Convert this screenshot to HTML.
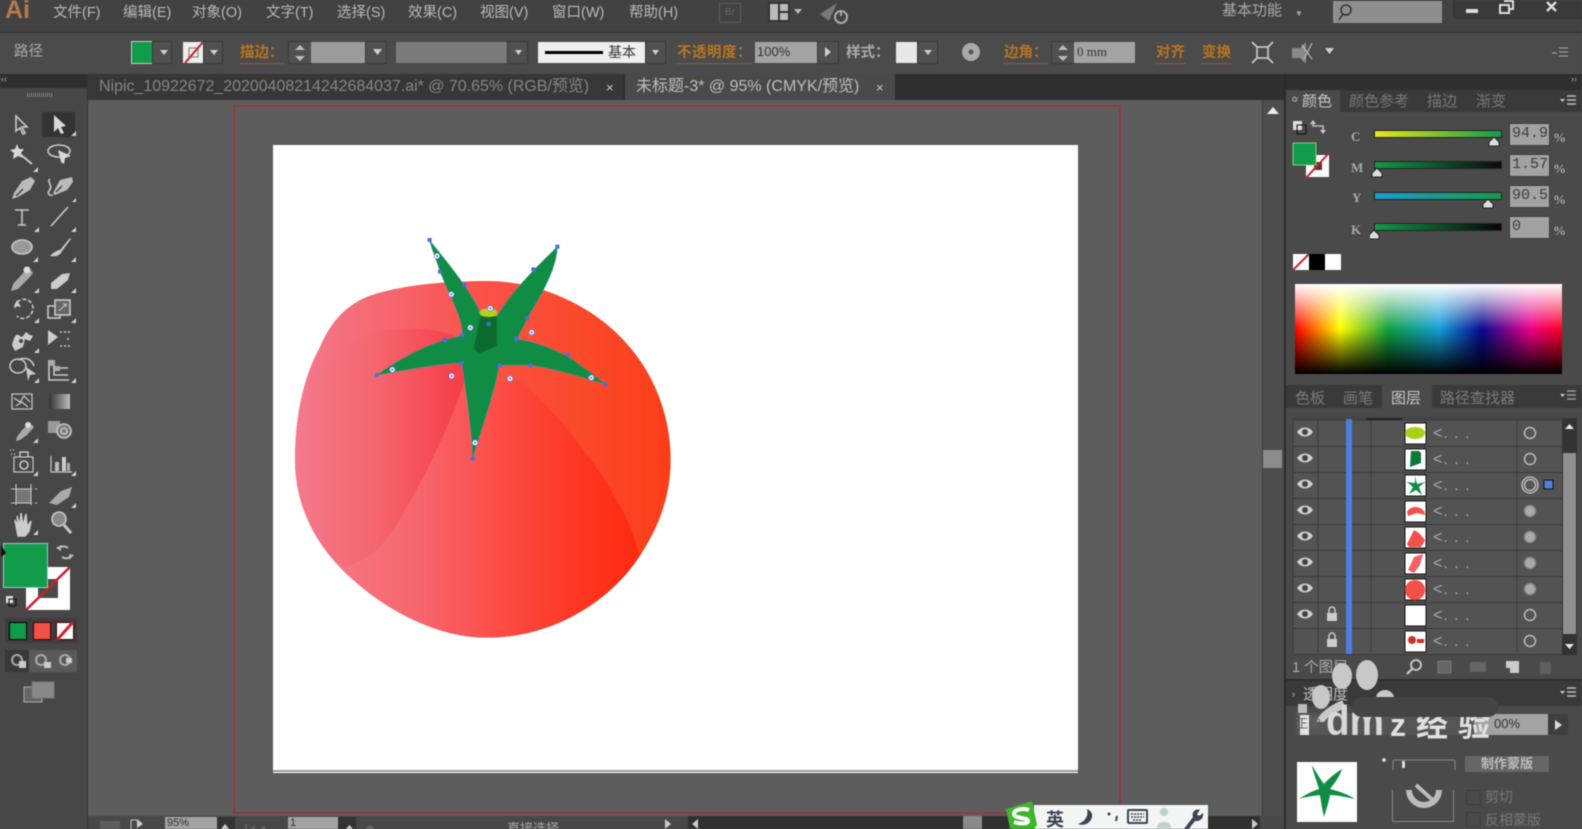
<!DOCTYPE html>
<html><head><meta charset="utf-8">
<style>
html,body{margin:0;padding:0;background:#4a4a4a}
#p{position:relative;width:1582px;height:829px;overflow:hidden;background:#4a4a4a;font-family:"Liberation Sans","Noto Sans CJK SC",sans-serif;color:#b5b5b5;filter:blur(.5px)}
#p div{position:absolute}
.t{white-space:nowrap;line-height:1}
.m{font-size:14.5px;top:6px;color:#b8b8b8}
.o{font-size:14.5px;top:46px;color:#b87420;font-weight:bold;border-bottom:1px dotted #b87420;padding-bottom:2px}
.b{background:#505050;height:21px;top:42px;outline:1px solid #393939}
.i{background:#a3a3a3;height:21px;top:42px;color:#333;font-size:13px;line-height:20px}
.lb{font:bold 13px "Liberation Serif",serif;color:#aaa}
.v{background:#a2a2a2;left:1510px;width:39px;height:21px;color:#3c3c3c;font:15px/20px "Liberation Mono",monospace;text-indent:2px;overflow:hidden;outline:1px solid #3d3d3d}
.s{left:1375px;width:126px;height:6px;outline:1px solid #222}
.r{left:1293px;width:269px;height:25px;background:#535353;border-bottom:1px solid #3a3a3a}
</style></head><body><div id="p">

<!-- menu bar -->
<div style="left:0;top:0;width:1582px;height:32px;background:#424242"></div>
<div style="left:0;top:32px;width:1582px;height:1px;background:#333"></div>
<div style="left:0;top:33px;width:1582px;height:41px;background:#4b4b4b"></div>
<div class="t" style="left:5px;top:-2px;font-size:25px;font-weight:bold;color:#b8794a">Ai</div>
<div class="t m" style="left:53px">文件(F)</div>
<div class="t m" style="left:123px">编辑(E)</div>
<div class="t m" style="left:192px">对象(O)</div>
<div class="t m" style="left:266px">文字(T)</div>
<div class="t m" style="left:337px">选择(S)</div>
<div class="t m" style="left:408px">效果(C)</div>
<div class="t m" style="left:480px">视图(V)</div>
<div class="t m" style="left:552px">窗口(W)</div>
<div class="t m" style="left:629px">帮助(H)</div>
<div class="t" style="left:719px;top:3px;width:20px;height:18px;border:1px solid #5c5c5c;font-size:10px;line-height:18px;text-align:center;color:#666">Br</div>
<svg style="position:absolute;left:765px;top:0" width="90" height="28"><path d="M3 2h22v20H3z" fill="#333"/><path d="M5 4h8v16H5zM15 4h8v7h-8zM15 13h8v7h-8z" fill="#bbb"/><path d="M29 9h8l-4 5z" fill="#bbb"/><path d="M55 14L72 3l-8 18z" fill="#777"/><circle cx="76" cy="17" r="6" fill="none" stroke="#aaa" stroke-width="2"/><path d="M76 10v6" stroke="#aaa" stroke-width="2"/></svg>
<div class="t" style="left:1222px;top:3px;font-size:15px;color:#a8a8a8">基本功能</div>
<div class="t" style="left:1295px;top:10px;font-size:8px;color:#aaa">▼</div>
<div style="left:1333px;top:1px;width:109px;height:22px;background:#8e8e8e"></div>
<svg style="position:absolute;left:1333px;top:1px" width="24" height="22"><circle cx="13" cy="9" r="5" fill="none" stroke="#333" stroke-width="1.500"/><path d="M10 13l-4 6" stroke="#333" stroke-width="1.500"/></svg>
<div style="left:1453px;top:-3px;width:129px;height:20px;background:#3a3a3a;border-radius:4px;border:1px solid #2e2e2e"></div>
<svg style="position:absolute;left:1453px;top:0" width="129" height="18"><path d="M13 9h12v4H13z" fill="#ddd"/><path d="M47 5h9v8h-9zM51 1h9v8h-3" fill="none" stroke="#ddd" stroke-width="2"/><path d="M94 2l9 9M103 2l-9 9" stroke="#ddd" stroke-width="2.400"/></svg>

<!-- control bar -->
<div class="t" style="left:14px;top:45px;font-size:14.5px;color:#aaa">路径</div>
<div style="left:132px;top:42px;width:21px;height:21px;background:#129b4a;outline:1px solid #ccc"></div>
<div class="b" style="left:153px;width:18px"></div>
<div style="left:183px;top:42px;width:21px;height:21px;background:#eee"></div>
<svg style="position:absolute;left:183px;top:42px" width="21" height="21"><rect x="6" y="6" width="9" height="9" fill="none" stroke="#777"/><path d="M20 0L2 21" stroke="#c8202c" stroke-width="2"/></svg>
<div class="b" style="left:204px;width:18px"></div>
<div class="t o" style="left:240px">描边：</div>
<div class="b" style="left:289px;width:22px"></div>
<div class="i" style="left:311px;width:55px;background:#9b9b9b"></div>
<div class="b" style="left:366px;width:20px"></div>
<div class="i" style="left:396px;width:112px;background:#7b7b7b"></div>
<div class="b" style="left:508px;width:19px"></div>
<div style="left:538px;top:42px;width:108px;height:21px;background:#efefef"></div>
<div style="left:545px;top:51px;width:58px;height:3px;background:#000"></div>
<div class="t" style="left:608px;top:45px;font-size:14px;color:#333">基本</div>
<div class="b" style="left:646px;width:19px"></div>
<div class="t o" style="left:677px;letter-spacing:.5px">不透明度：</div>
<div class="i" style="left:755px;width:63px;text-indent:2px">100%</div>
<div class="b" style="left:818px;width:20px"></div>
<div class="t" style="left:846px;top:46px;font-size:14.5px;font-weight:bold;color:#aaa">样式：</div>
<div style="left:896px;top:42px;width:22px;height:21px;background:#e8e8e8"></div>
<div class="b" style="left:918px;width:19px"></div>
<div class="b" style="left:1052px;width:22px"></div>
<svg style="position:absolute;left:0;top:33px" width="1582" height="40">
 <g fill="#cfcfcf"><path d="M160 17h8l-4 5zM210 17h8l-4 5zM373 16h9l-4.500 6zM515 17h7l-3.500 5zM652 17h7l-3.500 5zM924 17h8l-4 5zM1325 15h9l-4.500 6zM825 14l6 5-6 5z"/></g>
 <g fill="#bbb"><path d="M300 12l-5 5h10zM295 23l5 5 5-5z"/><path d="M1063 12l-5 5h10zM1058 23l5 5 5-5z"/></g>
 <circle cx="971" cy="19" r="9" fill="#aaa"/><circle cx="971" cy="19" r="2.500" fill="#555"/>
 <g fill="none" stroke="#ccc" stroke-width="1.600"><rect x="1257" y="14" width="11" height="11"/><path d="M1252 9l5 5M1273 9l-5 5M1252 30l5-5M1273 30l-5-5"/></g>
 <path d="M1292 15h8l6-6v22l-6-6h-8z" fill="#888"/><path d="M1302 12l10 14M1312 10l-8 16" stroke="#ccc"/>
 <g stroke="#aaa"><path d="M1552 20h5M1559 15h9M1559 19h9M1559 23h9"/></g>
</svg>
<div class="t o" style="left:1004px">边角：</div>
<div class="i" style="left:1074px;width:61px;text-indent:3px;font-family:'Liberation Serif',serif">0 mm</div>
<div class="t o" style="left:1156px">对齐</div>
<div class="t o" style="left:1202px">变换</div>

<!-- tab strip -->
<div style="left:0;top:74px;width:1582px;height:26px;background:#2f2f2f"></div>
<div style="left:87px;top:74px;width:536px;height:26px;background:#373737"></div>
<div class="t" style="left:99px;top:79px;font-size:16px;color:#858585;letter-spacing:-.02px">Nipic_10922672_20200408214242684037.ai* @ 70.65% (RGB/预览)</div>
<div class="t" style="left:606px;top:81px;font-size:13px;color:#ccc">×</div>
<div style="left:625px;top:74px;width:270px;height:26px;background:#4a4a4a"></div>
<div class="t" style="left:636px;top:79px;font-size:16px;color:#bdbdbd">未标题-3* @ 95% (CMYK/预览)</div>
<div class="t" style="left:876px;top:81px;font-size:13px;color:#ccc">×</div>

<!-- canvas -->
<div style="left:87px;top:100px;width:1175px;height:716px;background:#5d5d5d"></div>
<div style="left:233px;top:105px;width:884px;height:705px;border:2px solid #8f3a42"></div>
<div style="left:273px;top:145px;width:805px;height:628px;background:#fff"></div>
<div style="left:273px;top:770px;width:805px;height:2px;background:#9a9a9a"></div>

<svg style="position:absolute;left:280px;top:220px" width="400" height="430" viewBox="0 0 1200 1290">
<defs>
<linearGradient id="g1" gradientUnits="userSpaceOnUse" x1="45" y1="0" x2="1172" y2="0"><stop offset="0" stop-color="#f37a8c"/><stop offset=".25" stop-color="#f6666f"/><stop offset=".5" stop-color="#f95248"/><stop offset=".75" stop-color="#fa4a2c"/><stop offset="1" stop-color="#fb3e18"/></linearGradient>
<linearGradient id="g2" gradientUnits="userSpaceOnUse" x1="45" y1="0" x2="530" y2="0"><stop offset="0" stop-color="#f37a8c"/><stop offset=".5" stop-color="#f5666f"/><stop offset="1" stop-color="#f5404a"/></linearGradient>
<linearGradient id="g3" gradientUnits="userSpaceOnUse" x1="190" y1="0" x2="1075" y2="0"><stop offset="0" stop-color="#f5757f"/><stop offset=".25" stop-color="#f7666e"/><stop offset=".5" stop-color="#fb4f4a"/><stop offset=".75" stop-color="#fd3a28"/><stop offset="1" stop-color="#ff2a0e"/></linearGradient>
<g id="h"><circle r="8" fill="#fff" stroke="#6f8fe0" stroke-width="2.500"/><circle r="3" fill="#4a6fd8"/></g>
<clipPath id="tc"><path d="M620 183C760 183 900 240 1000 330C1110 430 1172 570 1172 720C1172 880 1090 1000 1040 1060C950 1165 800 1253 620 1253C470 1253 320 1170 220 1080C110 985 45 860 45 720C45 590 70 470 120 381C150 310 190 265 250 235C320 205 450 183 620 183Z"/></clipPath>
</defs>
<g clip-path="url(#tc)">
<rect x="0" y="150" width="1200" height="1120" fill="url(#g1)"/>
<path d="M240 352C330 315 440 320 520 345L555 480C500 640 420 800 340 930C300 990 250 1030 190 1040C110 980 20 860 20 720C20 590 90 440 240 352Z" fill="url(#g2)"/>
<path d="M555 500C500 640 420 800 340 930C300 990 250 1030 190 1040L100 1260H1200V1000H1075C1050 850 850 590 720 480Z" fill="url(#g3)"/>
<path d="M1075 960L1040 1060L1200 1100V900Z" fill="#fa4a24" opacity="0"/>
</g>
<path d="M449 60C470 90 560 190 600 275L650 290C690 220 760 150 832 80C830 150 780 230 742 295C730 320 720 340 710 357C770 365 860 400 900 435C930 455 960 480 977 493C900 470 800 440 750 436L658 436C640 530 600 640 578 715C575 640 565 560 545 430C480 430 380 450 290 465C340 430 420 380 495 360L547 345C550 300 510 230 480 155C470 120 455 90 449 60Z" fill="#118c45" stroke="#5f8fb0" stroke-width="1.500"/>
<path d="M600 290L650 290L650 378L597 400L582 385Z" fill="#0c6a2e"/>
<ellipse cx="625" cy="278" rx="27" ry="13" fill="#b4cf20"/>
<g fill="#4a70d8"><rect x="443" y="54" width="12" height="12"/><rect x="474" y="149" width="12" height="12"/><rect x="547" y="189" width="12" height="12"/><rect x="826" y="74" width="12" height="12"/><rect x="754" y="142" width="12" height="12"/><rect x="736" y="289" width="12" height="12"/><rect x="704" y="351" width="12" height="12"/><rect x="858" y="398" width="12" height="12"/><rect x="971" y="487" width="12" height="12"/><rect x="745" y="430" width="12" height="12"/><rect x="652" y="430" width="12" height="12"/><rect x="539" y="424" width="12" height="12"/><rect x="489" y="354" width="12" height="12"/><rect x="541" y="339" width="12" height="12"/><rect x="285" y="459" width="12" height="12"/><rect x="572" y="709" width="12" height="12"/><rect x="620" y="306" width="12" height="12"/></g>
<use href="#h" x="471" y="108"/><use href="#h" x="514" y="223"/><use href="#h" x="631" y="265"/><use href="#h" x="571" y="323"/><use href="#h" x="755" y="337"/><use href="#h" x="337" y="449"/><use href="#h" x="515" y="468"/><use href="#h" x="690" y="476"/><use href="#h" x="934" y="473"/><use href="#h" x="585" y="668"/>
</svg>

<!-- vertical scrollbar -->
<div style="left:1262px;top:100px;width:20px;height:716px;background:#4d4d4d;border-left:1px solid #3c3c3c"></div>
<svg style="position:absolute;left:1262px;top:100px" width="22" height="20"><path d="M5 14L11 7l6 7z" fill="#eee"/></svg>
<div style="left:1263px;top:450px;width:19px;height:18px;background:#8c8c8c"></div>

<!-- status bar -->
<div style="left:87px;top:816px;width:1197px;height:13px;background:#484848"></div>
<div style="left:100px;top:821px;width:20px;height:8px;background:#5c5c5c"></div>
<div class="i" style="left:165px;top:817px;width:52px;height:12px;font-size:11px;line-height:13px;text-indent:2px">95%</div>
<div style="left:217px;top:817px;width:18px;height:12px;background:#333"></div>
<div class="i" style="left:288px;top:817px;width:50px;height:12px;font-size:11px;line-height:13px;text-indent:2px">1</div>
<div style="left:338px;top:817px;width:18px;height:12px;background:#333"></div>
<div class="t" style="left:507px;top:822px;font-size:13px;color:#aaa">直接选择</div>
<div style="left:688px;top:816px;width:572px;height:13px;background:#303030"></div>
<div style="left:963px;top:816px;width:19px;height:13px;background:#8a8a8a"></div>
<svg style="position:absolute;left:87px;top:816px" width="1197" height="13"><g fill="#ccc"><path d="M578 3l6 5-6 5zM611 3l-6 5 6 5zM1165 3l6 5-6 5z"/><path d="M44 4h6M44 4v9" stroke="#ccc" fill="none"/><path d="M50 3l6 5-6 4z"/><path d="M131 13h8l-4-5z" transform="translate(3,0)"/><path d="M135 13h7l-3.500-4z" transform="translate(124,0)"/></g><g fill="#666"><path d="M158 8h2v5h-2zM163 13l5-4v4zM173 13l5-4v4zM278 13l5-4v4zM283 9l5 4h-5z"/></g></svg>

<!-- left toolbar -->
<div style="left:0;top:74px;width:87px;height:755px;background:#474747"></div>
<div style="left:0;top:74px;width:87px;height:14px;background:#2f2f2f"></div>
<div class="t" style="left:1px;top:75px;font-size:9px;color:#aaa">‹‹</div>
<div style="left:27px;top:93px;width:25px;height:4px;background:repeating-linear-gradient(90deg,#888 0 1px,#3a3a3a 1px 2px)"></div>
<div style="left:87px;top:74px;width:1px;height:755px;background:#333"></div>
<div style="left:42px;top:112px;width:33px;height:25px;background:#333"></div>
<svg style="position:absolute;left:0;top:100px" width="87" height="620" viewBox="0 100 87 620">
<g fill="none" stroke="#c8c8c8" stroke-width="1.600">
<path d="M16 116l0 15 4-3 3 6 2-1-3-6 5 0z" />
<path d="M54 115v17l4-4 3 6 3-1-3-6 5-1z" fill="#d8d8d8" stroke="none"/>
<path d="M17 144l2 5 5 0-3 4 2 5-5-2-5 3 1-6-4-3 5-1z" fill="#d8d8d8" stroke="none"/><path d="M20 154l12 10" stroke-width="2"/>
<ellipse cx="59" cy="151" rx="11" ry="6"/><path d="M58 150l13 6-6 2-1 6-3-2z" fill="#d8d8d8" stroke="none"/>
<path d="M31 177l-9 4-8 12-2 6 6-2 12-7 5-9z" fill="#bbb" stroke="none"/><path d="M16 196l7-7" stroke="#555"/>
<path d="M50 179c-4 3 4 6-1 12-2 3 1 5 4 4" /><path d="M72 177l-12 3-7 13 2 2 12-5 6-8z" fill="#bbb" stroke="none"/><path d="M56 192l6-6" stroke="#555"/>
<path d="M15 210h14M22 210v15M18 225h8" />
<path d="M51 226l17-19" />
<ellipse cx="22" cy="247" rx="10" ry="7" fill="#999"/>
<path d="M70 238l-10 12c-3 0-7 3-10 6 5 1 10 0 12-5l9-12z" fill="#ccc" stroke="none"/>
<path d="M29 268l-4 3-12 13-2 7 7-2 12-12 3-4z" fill="#aaa" stroke="none"/><circle cx="27" cy="270" r="3.500" fill="#ddd" stroke="none"/>
<path d="M51 283l11-9 8-1-2 7-11 9h-6z" fill="#ccc" stroke="none"/>
<path d="M15 308a9 9 0 1 1 16 6a9 9 0 0 1-14 2" stroke-dasharray="4 2"/><path d="M17 300l-3 6 7 1z" fill="#ccc" stroke="none"/>
<rect x="48" y="306" width="12" height="12"/><rect x="55" y="300" width="15" height="15" fill="#666"/><path d="M59 311l7-7M63 304h3v3" stroke-width="1"/>
<path d="M12 345c2-8 4-13 8-9s5-8 8-2l5 2-3 5-5-2-2 8-8 4z" fill="#ccc" stroke="none"/><circle cx="21" cy="341" r="2" fill="#444" stroke="none"/>
<path d="M48 330l10 7-10 8z" fill="#ccc" stroke="none"/><path d="M60 332h10M60 346h10M68 338v4" stroke-dasharray="2 2"/>
<ellipse cx="18" cy="366" rx="8" ry="7"/><path d="M26 367l10 7-6 1-2 6z" fill="#ccc" stroke="none"/><path d="M18 360c8-4 14 0 16 6"/>
<path d="M49 360v20h20M54 362v13h14M60 368h8" /><path d="M49 360h6v6h-6zM55 366h5v5h-5z" fill="#aaa" stroke="none"/>
<rect x="12" y="394" width="20" height="15" stroke-width="1.200"/><path d="M14 398l6 4 4-6 6 6M16 406l6-4 6 5" stroke-width="1.200"/>
</g>
<defs><linearGradient id="gb" x1="0" x2="1"><stop offset="0" stop-color="#333"/><stop offset="1" stop-color="#bbb"/></linearGradient></defs>
<rect x="49" y="394" width="21" height="15" fill="url(#gb)"/>
<g fill="none" stroke="#c8c8c8" stroke-width="1.600">
<path d="M30 423l-8 7-5 7-1 4 4-1 7-5 7-8z" fill="#aaa" stroke="none"/><circle cx="28" cy="425" r="3" fill="#ddd" stroke="none"/>
<rect x="48" y="421" width="12" height="12" fill="#999" stroke="none"/><circle cx="64" cy="431" r="7" fill="#777"/><circle cx="64" cy="431" r="3" />
<rect x="14" y="457" width="19" height="15" stroke-width="1.200"/><circle cx="24" cy="465" r="4"/><path d="M20 457v-5h8v5" stroke-width="1.400"/><path d="M10 450h6M11 454h5" stroke-dasharray="1 2"/>
<path d="M51 456v16h21" stroke-width="1.200"/><rect x="55" y="462" width="4" height="9" fill="#bbb" stroke="none"/><rect x="62" y="457" width="4" height="14" fill="#ccc" stroke="none"/><rect x="67" y="463" width="3" height="8" fill="#aaa" stroke="none"/>
<rect x="16" y="489" width="15" height="14" fill="#777" stroke="#ccc" stroke-width="1"/><path d="M11 489h26M11 503h26M16 484v24M31 484v24" stroke-width="1" stroke-dasharray="5 3"/>
<path d="M49 503l12-12 11-4-3 10-12 8z" fill="#aaa" stroke="none"/>
<path d="M15 520l4 8-2-12 3 10 1-13 2 13 3-12 1 13 4-6-2 10-4 5h-7z" fill="#ccc" stroke="#ccc" stroke-width="1.500"/>
<circle cx="59" cy="519" r="7" fill="#888"/><path d="M64 525l7 8" stroke-width="3"/>
</g>
<g fill="#d0d0d0"><path d="M76 136h-5l5-5zM38 172h-5l5-5zM76 202h-4l4-4zM39 232h-5l5-5zM76 232h-5l5-5zM38 262h-5l5-5zM76 262h-5l5-5zM39 293h-5l5-5zM76 293h-5l5-5zM39 323h-5l5-5zM76 323h-5l5-5zM39 353h-5l5-5zM39 383h-5l5-5zM76 383h-5l5-5zM38 443h-5l5-5zM38 476h-5l5-5zM76 476h-5l5-5zM76 508h-5l5-5zM38 535h-5l5-5z"/></g>
</svg>
<!-- fill/stroke -->
<div style="left:26px;top:567px;width:44px;height:43px;background:#fff"></div>
<div style="left:38px;top:579px;width:20px;height:19px;background:#4a4a4a"></div>
<svg style="position:absolute;left:26px;top:567px" width="44" height="43"><path d="M44 0L0 43" stroke="#c8202c" stroke-width="2.500"/></svg>
<div style="left:4px;top:544px;width:43px;height:43px;background:#129b4a;outline:1px solid #9cc"></div>
<svg style="position:absolute;left:0;top:540px" width="87" height="75"><path d="M58 9a7 7 0 0 1 10-1M72 15a7 7 0 0 1-10 2" fill="none" stroke="#bbb" stroke-width="2"/><path d="M56 8l5-3v6zM74 15l-5 5v-6z" fill="#bbb"/><path d="M1 5l5 8-5 4z" fill="#111"/><rect x="6" y="56" width="7" height="7" fill="#ddd"/><rect x="9" y="59" width="7" height="7" fill="none" stroke="#111"/></svg>
<div style="left:5px;top:618px;width:72px;height:25px;background:#3d3d3d"></div>
<div style="left:9px;top:622px;width:16px;height:16px;background:#129b4a;border:1px solid #000"></div>
<div style="left:33px;top:622px;width:16px;height:16px;background:#f4504a;border:1px solid #400"></div>
<div style="left:56px;top:622px;width:16px;height:16px;background:#fff;border:1px solid #400"></div>
<svg style="position:absolute;left:56px;top:622px" width="18" height="18"><path d="M17 0L1 18" stroke="#d0202c" stroke-width="3"/></svg>
<div style="left:5px;top:650px;width:24px;height:22px;background:#383838"></div>
<div style="left:29px;top:650px;width:48px;height:22px;background:#5a5a5a"></div>
<svg style="position:absolute;left:5px;top:650px" width="72" height="22"><g fill="none" stroke="#aaa" stroke-width="2"><circle cx="12" cy="10" r="5"/><circle cx="36" cy="10" r="5"/><circle cx="60" cy="10" r="5"/></g><rect x="14" y="11" width="7" height="7" fill="#ccc"/><rect x="39" y="12" width="7" height="6" fill="#ccc"/><rect x="61" y="8" width="6" height="5" fill="#ccc"/></svg>
<svg style="position:absolute;left:23px;top:680px" width="36" height="24"><rect x="1" y="7" width="18" height="15" fill="#666" stroke="#aaa"/><rect x="9" y="2" width="22" height="16" fill="#888" stroke="#777"/></svg>

<!-- right panels -->
<div style="left:1284px;top:74px;width:298px;height:755px;background:#4a4a4a;border-left:2px solid #2c2c2c;box-sizing:border-box"></div>
<div style="left:1286px;top:74px;width:296px;height:16px;background:#2f2f2f"></div>
<div class="t" style="left:1571px;top:75px;font-size:9px;color:#aaa">››</div>
<div style="left:1286px;top:90px;width:296px;height:22px;background:#3a3a3a"></div>
<div style="left:1286px;top:90px;width:54px;height:22px;background:#4a4a4a"></div>
<div class="t" style="left:1291px;top:95px;font-size:9px;color:#ccc">≎</div>
<div class="t" style="left:1302px;top:94px;font-size:15px;color:#c8c8c8">颜色</div>
<div class="t" style="left:1349px;top:94px;font-size:15px;color:#777">颜色参考</div>
<div class="t" style="left:1427px;top:94px;font-size:15px;color:#777">描边</div>
<div class="t" style="left:1476px;top:94px;font-size:15px;color:#777">渐变</div>
<svg style="position:absolute;left:1560px;top:94px" width="20" height="14"><path d="M0 5h5l-2.500 3z" fill="#ccc"/><path d="M7 2h9M7 6h9M7 10h9" stroke="#bbb" stroke-width="1.400"/></svg>
<svg style="position:absolute;left:1292px;top:118px" width="40" height="64">
<rect x="1" y="3" width="9" height="9" fill="#ddd"/><rect x="5" y="7" width="9" height="9" fill="none" stroke="#111"/>
<path d="M21 3v5h10v6" fill="none" stroke="#bbb" stroke-width="1.600"/><path d="M18 6l3-4 3 4zM28 12l3 4 3-4z" fill="#ccc"/>
<rect x="14" y="37" width="23" height="22" fill="#fff"/><rect x="22" y="44" width="8" height="8" fill="#533"/><path d="M37 35L13 61" stroke="#c8202c" stroke-width="2"/>
<rect x="1" y="25" width="23" height="22" fill="#129b4a" stroke="#8c8" stroke-width="1"/>
</svg>
<div class="t lb" style="left:1351px;top:129px">C</div>
<div class="t lb" style="left:1351px;top:160px">M</div>
<div class="t lb" style="left:1352px;top:190px">Y</div>
<div class="t lb" style="left:1351px;top:222px">K</div>
<div class="s" style="top:131px;background:linear-gradient(90deg,#e9e51a,#129b4a)"></div>
<div class="s" style="top:162px;background:linear-gradient(90deg,#139a4a,#0a0a0a)"></div>
<div class="s" style="top:193px;background:linear-gradient(90deg,#1c9cd0,#129b4a)"></div>
<div class="s" style="top:224px;background:linear-gradient(90deg,#139a4a,#050505)"></div>
<svg style="position:absolute;left:1370px;top:130px" width="140" height="112"><g fill="#ddd" stroke="#222"><path d="M124 7l5 5v4h-10v-4z"/><path d="M7 38l5 5v4H2v-4z"/><path d="M118 69l5 5v4h-10v-4z"/><path d="M4 100l5 5v4H-1v-4z"/></g></svg>
<div class="v t" style="top:124px">94.9</div>
<div class="v t" style="top:155px">1.57</div>
<div class="v t" style="top:186px">90.59</div>
<div class="v t" style="top:217px">0</div>
<div class="t lb" style="left:1553px;top:130px">%</div>
<div class="t lb" style="left:1553px;top:161px">%</div>
<div class="t lb" style="left:1553px;top:192px">%</div>
<div class="t lb" style="left:1553px;top:223px">%</div>
<div style="left:1293px;top:254px;width:16px;height:16px;background:#fff"></div>
<svg style="position:absolute;left:1293px;top:254px" width="16" height="16"><path d="M16 0L0 16" stroke="#c8202c" stroke-width="2"/></svg>
<div style="left:1309px;top:254px;width:16px;height:16px;background:#000"></div>
<div style="left:1325px;top:254px;width:16px;height:16px;background:#fff"></div>
<div style="left:1295px;top:284px;width:267px;height:90px;background:linear-gradient(180deg,#fff 0,rgba(255,255,255,0) 50%,rgba(0,0,0,0) 50%,#000 100%),linear-gradient(90deg,#ff0000 0,#ffff00 17%,#10a040 35%,#14a0d8 54%,#0a0a90 70%,#ec008c 88%,#ff0020 100%)"></div>

<!-- layers panel -->
<div style="left:1286px;top:385px;width:296px;height:23px;background:#3a3a3a"></div>
<div style="left:1382px;top:385px;width:50px;height:23px;background:#4a4a4a"></div>
<div class="t" style="left:1295px;top:391px;font-size:15px;color:#7a7a7a">色板</div>
<div class="t" style="left:1343px;top:391px;font-size:15px;color:#7a7a7a">画笔</div>
<div class="t" style="left:1391px;top:391px;font-size:15px;color:#c8c8c8">图层</div>
<div class="t" style="left:1440px;top:391px;font-size:15px;color:#7a7a7a">路径查找器</div>
<svg style="position:absolute;left:1560px;top:389px" width="20" height="14"><path d="M0 5h5l-2.500 3z" fill="#ccc"/><path d="M7 2h9M7 6h9M7 10h9" stroke="#999" stroke-width="1.400"/></svg>
<div style="left:1293px;top:417px;width:269px;height:4px;background:#444"></div>

<div class="r" style="top:421px"></div><div class="r" style="top:447px"></div><div class="r" style="top:473px"></div><div class="r" style="top:499px"></div><div class="r" style="top:525px"></div><div class="r" style="top:551px"></div><div class="r" style="top:577px"></div><div class="r" style="top:603px"></div><div class="r" style="top:629px"></div>
<svg style="position:absolute;left:1280px;top:418px" width="302" height="240">
<defs><g id="eye"><path d="M-8 0C-4-6 4-6 8 0C4 6-4 6-8 0Z" fill="#d0d0d0"/><circle r="3" fill="#444"/></g>
<g id="lk"><rect x="-5" y="-2" width="10" height="8" fill="#ccc"/><path d="M-3-2v-3a3 3 0 0 1 6 0v3" fill="none" stroke="#ccc" stroke-width="1.500"/></g>
<g id="c1"><circle r="5.500" fill="#555" stroke="#bbb" stroke-width="1.500"/></g>
<g id="c2"><circle r="5.500" fill="#aaa" stroke="#888" stroke-width="1.500"/></g></defs>
<path d="M13 0v235M38 0v235M91 0v235M145 0v235M237 0v235" stroke="#3a3a3a" fill="none"/>
<rect x="66" y="1" width="6" height="235" fill="#4d7fe0"/>
<rect x="86" y="0" width="36" height="2" fill="#222"/>
<use href="#eye" x="25" y="14"/><use href="#eye" x="25" y="40"/><use href="#eye" x="25" y="66"/><use href="#eye" x="25" y="92"/><use href="#eye" x="25" y="118"/><use href="#eye" x="25" y="144"/><use href="#eye" x="25" y="170"/><use href="#eye" x="25" y="196"/>
<use href="#lk" x="52" y="197"/><use href="#lk" x="52" y="223"/>
<use href="#c1" x="250" y="15"/><use href="#c1" x="250" y="41"/><circle cx="250" cy="67" r="8" fill="none" stroke="#bbb" stroke-width="1.500"/><use href="#c1" x="250" y="67"/><use href="#c2" x="250" y="93"/><use href="#c2" x="250" y="119"/><use href="#c2" x="250" y="145"/><use href="#c2" x="250" y="171"/><use href="#c1" x="250" y="197"/><use href="#c1" x="250" y="223"/>
<rect x="264" y="62" width="9" height="9" fill="#4d7fe0" stroke="#111"/>
<g stroke="#111" fill="#fff"><rect x="125" y="5" width="21" height="21"/><rect x="125" y="31" width="21" height="21"/><rect x="125" y="57" width="21" height="21"/><rect x="125" y="83" width="21" height="21"/><rect x="125" y="109" width="21" height="21"/><rect x="125" y="135" width="21" height="21"/><rect x="125" y="161" width="21" height="21"/><rect x="125" y="187" width="21" height="21"/><rect x="125" y="213" width="21" height="21"/></g>
<ellipse cx="135" cy="15" rx="10" ry="6" fill="#a8d015"/>
<path d="M131 33h8l2 2v10l-11 4z" fill="#0c7a34"/>
<path d="M135 58l2 8 8-2-6 5 3 8-6-5-7 4 4-7-6-5 8 1z" fill="#118c45"/>
<path d="M127 94c3-6 12-7 17-1l1 4-8-2-9 3z" fill="#f4504a"/>
<path d="M127 126l7-14 5 3 6 7-4 7h-12z" fill="#f4504a"/>
<path d="M128 152l6-13 9-3-3 11-6 8z" fill="#f4606a"/>
<circle cx="135" cy="172" r="10" fill="#f4504a"/>
<path d="M128 222a4 4 0 1 1 8 0a4 4 0 1 1-8 0zM137 221h7v4h-7z" fill="#d0302a"/>
<g fill="#aaa" font-family="Liberation Sans" font-size="16" letter-spacing="1"><text x="153" y="20">&lt;. . .</text><text x="153" y="46">&lt;. . .</text><text x="153" y="72">&lt;. . .</text><text x="153" y="98">&lt;. . .</text><text x="153" y="124">&lt;. . .</text><text x="153" y="150">&lt;. . .</text><text x="153" y="176">&lt;. . .</text><text x="153" y="202">&lt;. . .</text><text x="153" y="228">&lt;. . .</text></g>
<rect x="282" y="0" width="15" height="237" fill="#333"/>
<rect x="283" y="35" width="13" height="181" fill="#8f8f8f"/>
<path d="M285 11l4.500-5 4.500 5zM285 226h9l-4.500 5z" fill="#e8e8e8"/>
</svg>
<div style="left:1286px;top:656px;width:296px;height:23px;background:#4a4a4a"></div>
<div class="t" style="left:1292px;top:661px;font-size:14.500px;color:#aaa">1 个图层</div>
<svg style="position:absolute;left:1400px;top:658px" width="170" height="18"><circle cx="16" cy="7" r="5" fill="none" stroke="#ccc" stroke-width="1.800"/><path d="M12 11l-5 5" stroke="#ccc" stroke-width="2.200"/><rect x="38" y="3" width="13" height="12" fill="#666" stroke="#777"/><rect x="70" y="4" width="16" height="10" fill="#666"/><path d="M106 3h13v12h-9v-5h-4z" fill="#ccc"/><rect x="140" y="4" width="11" height="12" fill="#5f5f5f"/></svg>

<!-- transparency panel -->
<div style="left:1286px;top:679px;width:296px;height:2px;background:#2f2f2f"></div>
<div style="left:1286px;top:681px;width:296px;height:25px;background:#3a3a3a"></div>
<div class="t" style="left:1292px;top:690px;font-size:9px;color:#ccc">›</div>
<div class="t" style="left:1303px;top:687px;font-size:15px;color:#c0c0c0">透明度</div>
<svg style="position:absolute;left:1560px;top:686px" width="20" height="14"><path d="M0 5h5l-2.500 3z" fill="#ccc"/><path d="M7 2h9M7 6h9M7 10h9" stroke="#bbb" stroke-width="1.400"/></svg>
<div style="left:1296px;top:713px;width:178px;height:22px;background:#555"></div>
<div class="i" style="left:1474px;top:714px;width:74px;height:21px;background:#a3a3a3;text-indent:20px;font-size:13px">00%</div>
<div style="left:1548px;top:714px;width:20px;height:21px;background:#3e3e3e"></div>
<svg style="position:absolute;left:1548px;top:714px" width="20" height="21"><path d="M7 6l7 5-7 5z" fill="#ddd"/></svg>
<div style="left:1297px;top:762px;width:60px;height:60px;background:#fff"></div>
<svg style="position:absolute;left:1297px;top:762px" width="60" height="60"><path d="M15 3C20 12 24 18 27 22C32 16 40 10 45 7C43 14 37 22 33 27C42 29 52 33 58 37C48 35 40 33 33 33C32 40 29 48 27 55C25 47 24 40 23 33C16 34 8 35 2 37C8 33 15 29 22 27C20 20 16 10 15 3Z" fill="#118c45"/></svg>
<div style="left:1392px;top:790px;width:62px;height:32px;border:1px solid #8a8a8a;border-top:0;box-sizing:border-box"></div>
<svg style="position:absolute;left:1380px;top:755px" width="80" height="55"><circle cx="4" cy="5" r="2" fill="#ccc"/><path d="M13 5h62M13 5v10M75 5v10" stroke="#888" fill="none"/><rect x="22" y="6" width="3" height="7" fill="#ddd"/><path d="M29 35a15 15 0 0 0 30 0" fill="none" stroke="#bbb" stroke-width="6"/><path d="M36 30l20 18" stroke="#bbb" stroke-width="4"/></svg>
<div class="t" style="left:1465px;top:756px;width:84px;height:16px;background:#666;color:#bbb;font-size:13px;line-height:16px;text-align:center;font-weight:bold">制作蒙版</div>
<div style="left:1466px;top:790px;width:13px;height:13px;border:1px solid #3c3c3c"></div>
<div style="left:1466px;top:812px;width:13px;height:13px;border:1px solid #3c3c3c"></div>
<div class="t" style="left:1485px;top:790px;font-size:14px;color:#777">剪切</div>
<div class="t" style="left:1485px;top:813px;font-size:14px;color:#777">反相蒙版</div>

<!-- baidu watermark -->
<svg style="position:absolute;left:1290px;top:660px" width="220" height="100">
<g fill="#c8c8c8"><ellipse cx="52" cy="16" rx="10" ry="13"/><ellipse cx="77" cy="15" rx="11" ry="15"/><ellipse cx="31" cy="37" rx="9" ry="12"/><ellipse cx="95" cy="38" rx="9" ry="8"/><path d="M52 40c-12 6-22 12-26 22h8c4-6 12-10 22-14z"/></g>
<rect x="8" y="44" width="9" height="9" fill="#bbb"/><rect x="10" y="55" width="9" height="20" fill="#e4e4e4"/>
<text x="36" y="75" font-family="Liberation Sans" font-size="42" font-weight="bold" fill="#d8d8d8" textLength="58" lengthAdjust="spacingAndGlyphs">dm</text>
<text x="100" y="76" font-family="Liberation Sans, Noto Sans CJK SC" font-size="32" font-weight="bold" fill="#e0e0e0" textLength="100">z经验</text>
<rect x="62" y="37" width="146" height="20" rx="10" fill="#444"/>
<text x="5" y="68" font-size="13" fill="#666" font-family="Liberation Sans, Noto Sans CJK SC">正常</text>
</svg>

<!-- IME bar -->
<div style="left:1034px;top:805px;width:174px;height:24px;background:#f3f5f5"></div>
<svg style="position:absolute;left:1004px;top:800px" width="210" height="29">
<path d="M2 9L28 1l5 24-3 4H6z" fill="#3eb52c"/>
<path d="M25 10c-5-2-15-1-15 4 0 5 14 3 14 7 0 3-8 3-14 1" fill="none" stroke="#fff" stroke-width="4"/>
<text x="42" y="26" font-family="Noto Sans CJK SC" font-weight="bold" font-size="18" fill="#3a4452">英</text>
<path d="M83 9c2 8-3 13-9 15 8 3 15-3 14-10-1-3-3-4-5-5z" fill="#3a4452"/>
<circle cx="105" cy="14" r="1.500" fill="#3a4452"/><path d="M113 16l-1 5" stroke="#3a4452" stroke-width="2"/>
<rect x="124" y="10" width="19" height="13" rx="1" fill="none" stroke="#3a4452" stroke-width="2"/><path d="M127 14h13M127 17h13M129 20h9" stroke="#3a4452" stroke-width="1.500" stroke-dasharray="2 1"/>
<circle cx="160" cy="12" r="4" fill="#bcd0cc"/><path d="M153 28c0-8 14-8 14 0z" fill="#bcd0cc"/>
<path d="M180 29l9-12c-2-5 3-9 7-7l-3 4 2 2 4-3c1 5-3 9-8 8l-7 9z" fill="#3a4452"/>
</svg>
</div></body></html>
